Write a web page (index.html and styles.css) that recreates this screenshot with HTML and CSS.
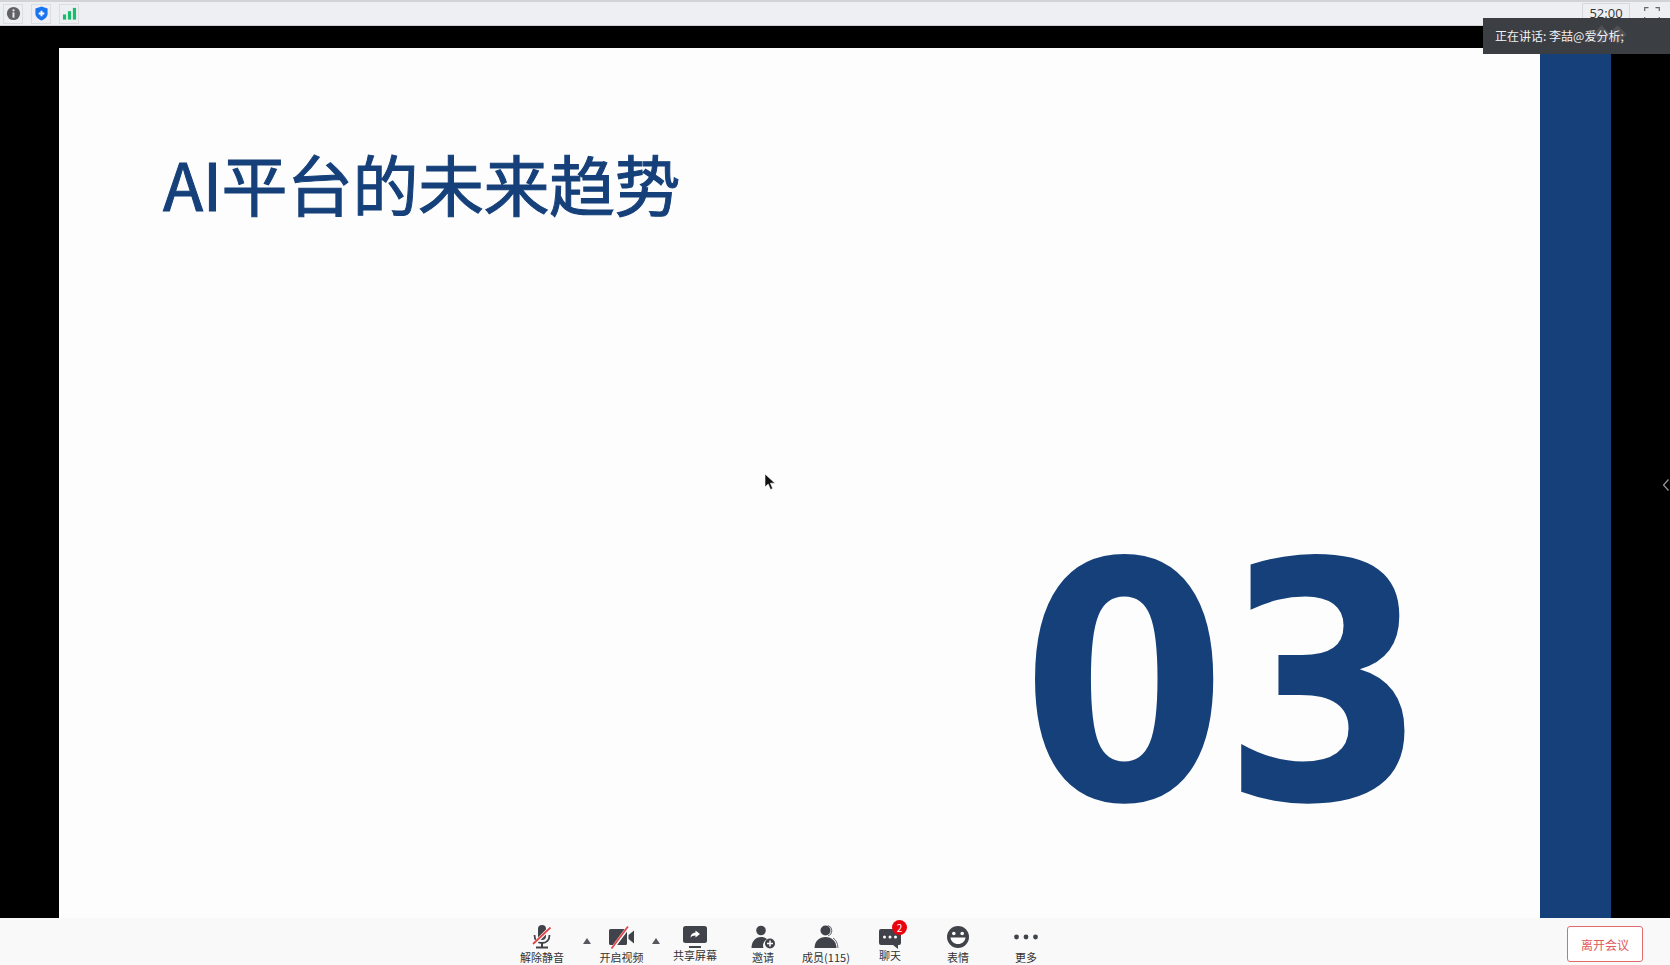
FILE: index.html
```html
<!DOCTYPE html>
<html lang="zh-CN">
<head>
    <meta charset="UTF-8">
    <title>会议</title>
    <link rel="stylesheet" href="styles.css">
</head>
<body>
    <div class="topbar">
        <span class="status-btn">
            <svg viewBox="0 0 16 16" width="15" height="15"><circle cx="8" cy="8" r="7" fill="#616166"/><circle cx="8" cy="4.6" r="1.2" fill="#eee"/><rect x="7" y="6.8" width="2" height="5.6" fill="#eee"/></svg>
        </span>
        <span class="status-btn">
            <svg viewBox="0 0 16 16" width="15" height="15"><path d="M8 .5 14.5 2.6V8c0 3.6-2.8 6-6.5 7.5C4.300 14 1.500 11.600 1.500 8V2.600Z" fill="#1a73f0"/><path d="M7 5h2v2h2v2H9v2H7V9H5V7h2Z" fill="#fff"/></svg>
        </span>
        <span class="status-btn">
            <svg viewBox="0 0 16 16" width="15" height="15"><rect x="1" y="9" width="3.400" height="5.500" fill="#17bd6c"/><rect x="6.300" y="5.500" width="3.400" height="9" fill="#17bd6c"/><rect x="11.600" y="2" width="3.400" height="12.500" fill="#17bd6c"/></svg>
        </span>
        <span class="timer">52:00</span>
        <svg class="fullscreen" viewBox="0 0 16 14" width="16" height="14"><path d="M.7 4V.7H4.500M11.500.7h3.800V4M.7 10v3.300H4.500M11.500 13.300h3.800V10" fill="none" stroke="#666" stroke-width="1.200"/></svg>
    </div>

    <div class="stage">
        <div class="slide">
            <div class="slide-body">
                <h1 class="slide-title">AI平台的未来趋势</h1>
                <div class="slide-number">03</div>
            </div>
            <div class="slide-band"></div>
        </div>
        <svg class="cursor" viewBox="0 0 12 18" width="12" height="18"><path d="M1 1v13l3.200-3 2.300 5.500 2.200-1-2.300-5.300H11Z" fill="#111" stroke="#fff" stroke-width=".6"/></svg>
        <svg class="side-arrow" viewBox="0 0 8 14" width="8" height="14"><path d="M6.500 1.500 1.500 7l5 5.500" fill="none" stroke="#9a9a9a" stroke-width="1.200"/></svg>
        <div class="speaker">正在讲话: 李喆@爱分析;<i class="smudge smudge-a"></i><i class="smudge smudge-b"></i></div>
    </div>

    <div class="toolbar">
        <div class="tool tool-mic">
            <svg viewBox="0 0 26 26" width="26" height="26">
                <rect x="9" y="1" width="8" height="15" rx="4" fill="#40434a"/>
                <path d="M5.500 11c0 5 3 8 7.500 8s7.500-3 7.500-8" fill="none" stroke="#40434a" stroke-width="1.800"/>
                <path d="M13 19v3.500M7 23.500h12" stroke="#40434a" stroke-width="2" fill="none"/>
                <path d="M4 21 22 3" stroke="#fff" stroke-width="3.500"/>
                <path d="M4 20 21.500 3.500" stroke="#e0474c" stroke-width="1.800"/>
            </svg>
            <span class="tool-label">解除静音</span>
        </div>
        <span class="caret"></span>
        <div class="tool tool-video">
            <svg viewBox="0 0 26 26" width="26" height="26">
                <rect x="0" y="5" width="18" height="16" rx="1.500" fill="#40434a"/>
                <path d="M19.500 11 25 6.500v13L19.500 15Z" fill="#40434a"/>
                <path d="M3 25 20 2" stroke="#fff" stroke-width="3.500"/>
                <path d="M2.500 24.500 19 2.500" stroke="#e0474c" stroke-width="1.800"/>
            </svg>
            <span class="tool-label">开启视频</span>
        </div>
        <span class="caret"></span>
        <div class="tool tool-share">
            <svg viewBox="0 0 26 26" width="26" height="26">
                <rect x="1" y="2" width="24" height="17" rx="2.500" fill="#40434a"/>
                <path d="M7 23h12" stroke="#40434a" stroke-width="2"/>
                <path d="M13.500 6.500 18 10l-4.500 3.500v-2c-2.500 0-4 .7-5 2.300.2-3.300 2-5 5-5.300Z" fill="#fff"/>
            </svg>
            <span class="tool-label">共享屏幕</span>
        </div>
        <div class="tool tool-invite">
            <svg viewBox="0 0 26 26" width="26" height="26">
                <circle cx="11" cy="6.500" r="4.800" fill="#40434a"/>
                <path d="M1.500 24c.3-7 4-11 9.500-11 2.500 0 4.600.8 6 2.200A7 7 0 0 0 13.500 24Z" fill="#40434a"/>
                <circle cx="20" cy="19.500" r="5" fill="#40434a"/>
                <path d="M20 16.500v6M17 19.500h6" stroke="#fff" stroke-width="1.500"/>
            </svg>
            <span class="tool-label">邀请</span>
        </div>
        <div class="tool tool-members">
            <svg viewBox="0 0 26 26" width="26" height="26">
                <circle cx="12.500" cy="6.500" r="5" fill="#40434a"/>
                <path d="M15 1.500a5.500 5.500 0 0 1 0 10.500" fill="none" stroke="#40434a" stroke-width=".8"/>
                <path d="M1.500 24c.3-7 4.500-11 11-11s10.700 4 11 11Z" fill="#40434a"/>
                <path d="M20 14c3 1.800 4.700 5 5 10" fill="none" stroke="#40434a" stroke-width=".8"/>
            </svg>
            <span class="tool-label">成员(115)</span>
        </div>
        <div class="tool tool-chat">
            <svg viewBox="0 0 26 26" width="26" height="26">
                <path d="M4 5h18a2 2 0 0 1 2 2v12a2 2 0 0 1-2 2h-1v4l-5-4H4a2 2 0 0 1-2-2V7a2 2 0 0 1 2-2Z" fill="#40434a"/>
                <circle cx="7.500" cy="13" r="1.500" fill="#fff"/><circle cx="13" cy="13" r="1.500" fill="#fff"/><circle cx="18.500" cy="13" r="1.500" fill="#fff"/>
            </svg>
            <span class="tool-label">聊天</span>
            <span class="badge">2</span>
        </div>
        <div class="tool tool-emoji">
            <svg viewBox="0 0 26 26" width="26" height="26">
                <circle cx="13" cy="13" r="11" fill="#40434a"/>
                <circle cx="8.800" cy="9.500" r="1.800" fill="#fff"/><circle cx="17.200" cy="9.500" r="1.800" fill="#fff"/>
                <path d="M5.500 13.500h15c-.5 4-3.500 6.500-7.500 6.500s-7-2.500-7.500-6.500Z" fill="#fff"/>
            </svg>
            <span class="tool-label">表情</span>
        </div>
        <div class="tool tool-more">
            <svg viewBox="0 0 26 26" width="26" height="26">
                <circle cx="3.500" cy="13" r="2.400" fill="#40434a"/><circle cx="13" cy="13" r="2.400" fill="#40434a"/><circle cx="22.500" cy="13" r="2.400" fill="#40434a"/>
            </svg>
            <span class="tool-label">更多</span>
        </div>
        <button class="leave-btn">离开会议</button>
    </div>
</body>
</html>
```

FILE: styles.css
```css
* {
    box-sizing: border-box;
}

html, body {
    height: 100%;
}

body {
    margin: 0;
    display: flex;
    flex-direction: column;
    overflow: hidden;
    background-color: #000;
    font-family: "Noto Sans CJK SC", "Liberation Sans", sans-serif;
}

.topbar {
    height: 26px;
    flex: none;
    display: flex;
    align-items: center;
    gap: 8px;
    padding: 0 10px 0 3px;
    background-color: #eeeff3;
    border-top: 2px solid #d3d3d6;
    border-bottom: 1px solid #d0d0d3;
}

.status-btn {
    width: 20px;
    height: 20px;
    display: flex;
    align-items: center;
    justify-content: center;
    border: 1px solid #dcdde0;
}

.timer {
    margin-left: auto;
    width: 48px;
    height: 22px;
    border: 1px solid #d8d8da;
    font-family: "Open Sans", sans-serif;
    font-size: 13px;
    line-height: 18px;
    text-align: center;
    color: #333;
}

.fullscreen {
    margin-left: 6px;
}

.stage {
    position: relative;
    flex: 1;
    min-height: 0;
    padding: 22px 59px 0 59px;
}

.slide {
    height: 100%;
    display: flex;
    background-color: #fdfdfd;
}

.slide-body {
    flex: 1;
    display: flex;
    flex-direction: column;
    padding: 97px 0 0 104px;
}

.slide-title {
    margin: 0;
    font-size: 66px;
    font-weight: 400;
    line-height: 74px;
    letter-spacing: -0.5px;
    -webkit-text-stroke: 1px #15407a;
    color: #15407a;
}

.slide-number {
    align-self: flex-end;
    margin: 296px 118px 0 0;
    font-family: "DejaVu Sans Condensed", "DejaVu Sans", sans-serif;
    font-stretch: condensed;
    font-size: 330px;
    font-weight: 700;
    line-height: 340px;
    letter-spacing: -6px;
    color: #15407a;
}

.slide-band {
    width: 71px;
    flex: none;
    background-color: #15407a;
}

.cursor {
    position: absolute;
    left: 764px;
    top: 447px;
}

.side-arrow {
    position: absolute;
    right: 0;
    top: 452px;
}

.speaker {
    position: absolute;
    right: 0;
    top: -8px;
    width: 187px;
    height: 36px;
    padding-left: 12px;
    overflow: hidden;
    background-color: #3b3e43;
    font-size: 12px;
    line-height: 35px;
    color: #f2f2f2;
}

.smudge {
    position: absolute;
    top: 10px;
    width: 13px;
    height: 13px;
    transform: rotate(45deg);
    background-color: rgba(255, 255, 255, 0.1);
}

.smudge-a {
    left: 112px;
}

.smudge-b {
    left: 128px;
}

.toolbar {
    height: 47px;
    flex: none;
    display: flex;
    padding-left: 510px;
    background-color: #f9f9f9;
}

.tool {
    position: relative;
    display: flex;
    flex-direction: column;
    align-items: center;
    flex: none;
    padding-top: 6px;
}

.tool svg {
    flex: none;
}

.tool-label {
    font-size: 11px;
    line-height: 14px;
    white-space: nowrap;
    color: #333;
}

.tool-mic { width: 64px; }
.tool-video { width: 43px; margin-left: 9px; }
.tool-share { width: 60px; margin-left: 5px; }
.tool-invite { width: 40px; margin-left: 18px; }
.tool-members { width: 60px; margin-left: 13px; }
.tool-chat { width: 40px; margin-left: 14px; }
.tool-emoji { width: 40px; margin-left: 28px; }
.tool-more { width: 40px; margin-left: 28px; }

.tool-share .tool-label,
.tool-chat .tool-label {
    margin-top: -2px;
}

.caret {
    flex: none;
    width: 0;
    height: 0;
    margin: 20px 0 0 9px;
    border-left: 4px solid transparent;
    border-right: 4px solid transparent;
    border-bottom: 6px solid #55585e;
}

.badge {
    position: absolute;
    top: 2px;
    left: 22px;
    width: 15px;
    height: 15px;
    border-radius: 50%;
    background-color: #e8030f;
    font-size: 10px;
    line-height: 15px;
    text-align: center;
    color: #fff;
}

.leave-btn {
    margin: 8px 27px 4px auto;
    width: 76px;
    height: 36px;
    padding: 0;
    background-color: #fff;
    border: 1px solid #e26a6f;
    border-radius: 3px;
    font-family: inherit;
    font-size: 12px;
    color: #e0585e;
}
```
